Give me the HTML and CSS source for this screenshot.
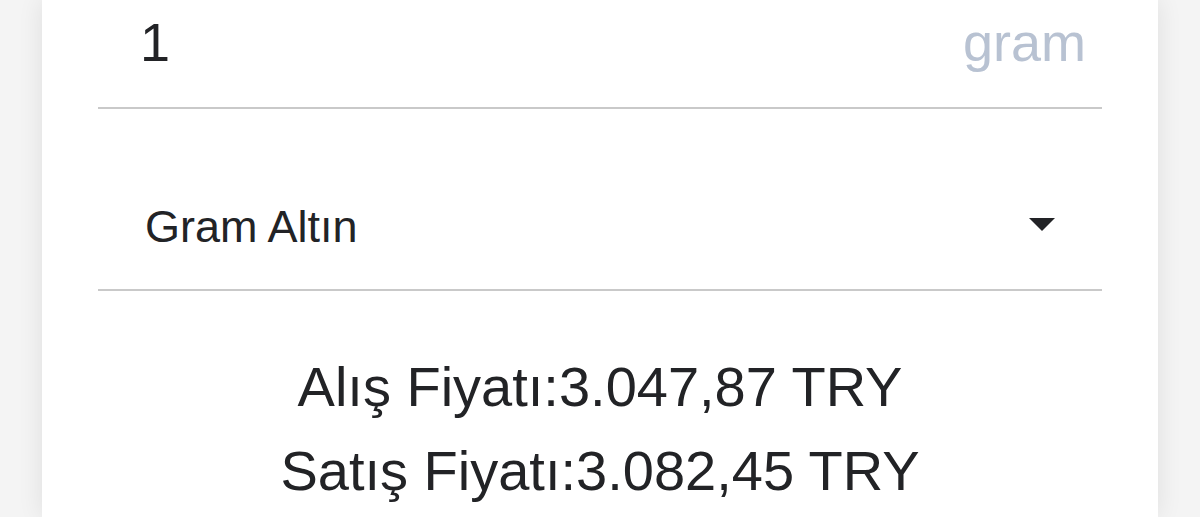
FILE: index.html
```html
<!DOCTYPE html>
<html lang="tr">
<head>
    <meta charset="UTF-8">
    <meta name="viewport" content="width=device-width, initial-scale=1.0">
    <title>Altın Hesaplama</title>
    <link rel="stylesheet" href="styles.css">
</head>
<body>
    <div class="card">
        <div class="field amount">
            <span class="value">1</span>
            <span class="unit">gram</span>
        </div>
        <div class="field select">
            <span class="value">Gram Altın</span>
            <span class="caret"></span>
        </div>
        <div class="prices">
            <div class="price">Alış Fiyatı:3.047,87 TRY</div>
            <div class="price">Satış Fiyatı:3.082,45 TRY</div>
        </div>
    </div>
</body>
</html>
```

FILE: styles.css
```css
body {
    margin: 0;
    padding: 0 42px;
    height: 517px;
    overflow: hidden;
    background: #f4f4f4;
    font-family: "Liberation Sans", Arial, sans-serif;
    color: #222326;
}

.card {
    background: #fff;
    height: 100%;
    padding: 0 56px;
    box-shadow: 0 0 24px rgba(0, 0, 0, 0.09);
}

.field {
    display: flex;
    align-items: center;
    justify-content: space-between;
    border-bottom: 2px solid #c9c9c9;
}

.amount {
    padding: 12px 16px 35px 42px;
    font-size: 54px;
    line-height: 60px;
}

.amount .unit {
    color: #b8c2d2;
}

.select {
    padding: 92px 47px 36px 47px;
    font-size: 45px;
    line-height: 52px;
}

.caret {
    width: 0;
    height: 0;
    border-left: 13px solid transparent;
    border-right: 13px solid transparent;
    border-top: 13px solid #222326;
    margin-bottom: 6px;
}

.prices {
    margin-top: 54px;
    text-align: center;
    font-size: 56px;
    line-height: 84px;
}
```
